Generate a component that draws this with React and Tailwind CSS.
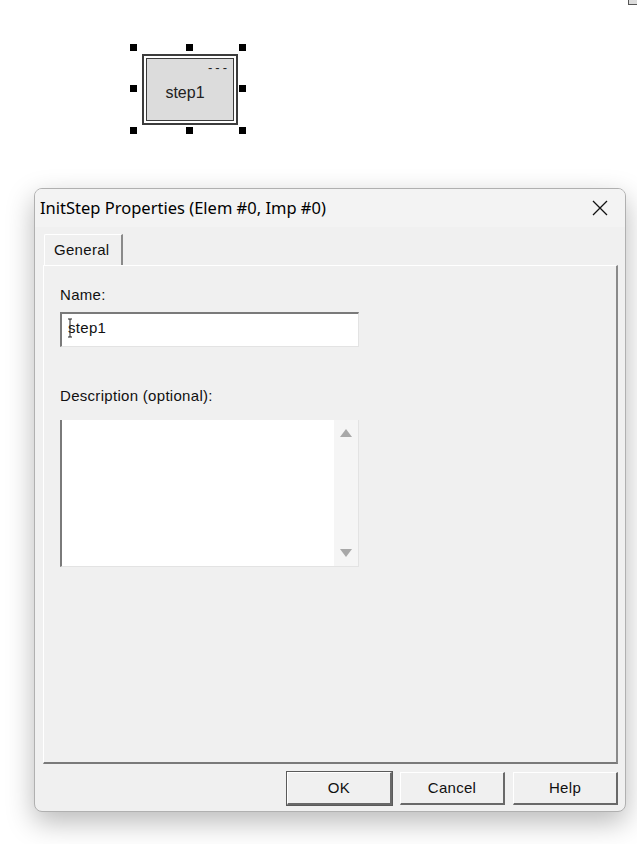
import React from "react";

const ui = { fontFamily: '"Liberation Sans", Arial, sans-serif' };

function Handle({ className }) {
    return <div className={`absolute w-[7px] h-[7px] bg-black ${className}`} />;
}

function StepNode() {
    return (
        <div className="relative ml-[130px] mt-[44px] w-[117px] h-[94px]">
            <div className="absolute left-[12px] top-[10px] w-[96px] h-[71px] border-2 border-[#3c3c3c] bg-white p-[2px]">
                <div className="relative w-full h-full border border-[#3c3c3c] bg-[#dcdcdc] flex items-center justify-center">
                    <span className="absolute right-[3px] top-[-1px] text-[13px] tracking-[3px] text-[#222]" style={ui}>
                        ---
                    </span>
                    <span className="text-[16px] text-[#222] mt-[6px] mr-[10px]" style={ui}>
                        step1
                    </span>
                </div>
            </div>
            <Handle className="left-0 top-0" />
            <Handle className="left-[56px] top-0" />
            <Handle className="left-[109px] top-0" />
            <Handle className="left-0 top-[41px]" />
            <Handle className="left-[109px] top-[41px]" />
            <Handle className="left-0 top-[83px]" />
            <Handle className="left-[56px] top-[83px]" />
            <Handle className="left-[109px] top-[83px]" />
        </div>
    );
}

function WinButton({ children, isDefault }) {
    return (
        <button
            className={`w-[105px] h-[33px] bg-[#f0f0f0] text-[15px] tracking-[0.3px] text-[#111] border-t border-l border-t-white border-l-white border-r-2 border-b-2 border-r-[#696969] border-b-[#696969] ${
                isDefault ? "outline outline-1 outline-[#5a5a5a]" : ""
            }`}
            style={ui}
        >
            {children}
        </button>
    );
}

export default function App() {
    return (
        <div className="relative w-[637px] h-[844px] bg-white overflow-hidden flow-root">
            {/* corner of another node peeking in at the top right */}
            <div className="absolute left-[628px] top-[-10px] w-[14px] h-[15px] border border-[#555] bg-[#dcdcdc]" />

            <StepNode />

            <div className="ml-[34px] mt-[50px] w-[592px] h-[624px] rounded-[8px] border border-[#b0b0b0] bg-[#f0f0f0] shadow-[0_10px_28px_rgba(0,0,0,0.28)] flex flex-col overflow-hidden">
                <div className="h-[38px] bg-[#f3f3f3] flex items-center justify-between pl-[5px] pr-[17px]">
                    <span className="text-[16.5px] text-black" style={{ fontFamily: '"Noto Sans", "Open Sans", sans-serif' }}>
                        InitStep Properties (Elem #0, Imp #0)
                    </span>
                    <svg width="16" height="16" viewBox="0 0 16 16" className="text-[#111]">
                        <path d="M1 1 L15 15 M15 1 L1 15" stroke="currentColor" strokeWidth="1.3" fill="none" />
                    </svg>
                </div>

                <div className="flex-1 flex flex-col pl-[8px] pr-[7px] pt-[7px] pb-[6px]">
                    <div className="flex h-[31px]">
                        <div
                            className="ml-[1px] w-[79px] h-full flex items-center pl-[9px] border-t border-l border-t-white border-l-white border-r-2 border-r-[#8a8a8a] text-[15px] tracking-[0.3px] text-[#111] rounded-tl-[2px]"
                            style={ui}
                        >
                            General
                        </div>
                    </div>

                    <div className="flex-1 border-t border-l border-t-white border-l-white border-r-2 border-b-2 border-r-[#8a8a8a] border-b-[#7a7a7a] pl-[16px] pt-[20px] tracking-[0.3px]" style={ui}>
                        <div className="text-[15px] text-[#111] leading-[18px]">Name:</div>
                        <div className="relative mt-[8px] w-[299px] h-[35px] bg-white border-t-2 border-l-2 border-t-[#7a7a7a] border-l-[#7a7a7a] border-r border-b border-r-[#e3e3e3] border-b-[#e3e3e3] flex items-center pl-[6px] pb-[3px]">
                            <span className="text-[15px] text-[#111]">step1</span>
                            <svg className="absolute left-[5px] top-[4px]" width="6" height="20" viewBox="0 0 6 20">
                                <path d="M1 1 L3 1 L3 19 L1 19 M3 1 L5 1 M3 19 L5 19" stroke="#222" strokeWidth="1" fill="none" />
                            </svg>
                        </div>

                        <div className="mt-[40px] text-[15px] text-[#111] leading-[18px]">Description (optional):</div>
                        <div className="mt-[15px] w-[299px] h-[147px] flex border-l-2 border-l-[#7a7a7a] border-r border-b border-r-[#e3e3e3] border-b-[#e3e3e3]">
                            <div className="flex-1 bg-white" />
                            <div className="w-[24px] bg-[#f5f5f5] flex flex-col items-center justify-between py-[9px]">
                                <svg width="12" height="8" viewBox="0 0 12 8">
                                    <path d="M6 0 L12 8 L0 8 Z" fill="#a8a8a8" />
                                </svg>
                                <svg width="12" height="8" viewBox="0 0 12 8">
                                    <path d="M0 0 L12 0 L6 8 Z" fill="#a8a8a8" />
                                </svg>
                            </div>
                        </div>
                    </div>

                    <div className="mt-[8px] flex justify-end gap-[8px]">
                        <WinButton isDefault>OK</WinButton>
                        <WinButton>Cancel</WinButton>
                        <WinButton>Help</WinButton>
                    </div>
                </div>
            </div>
        </div>
    );
}
